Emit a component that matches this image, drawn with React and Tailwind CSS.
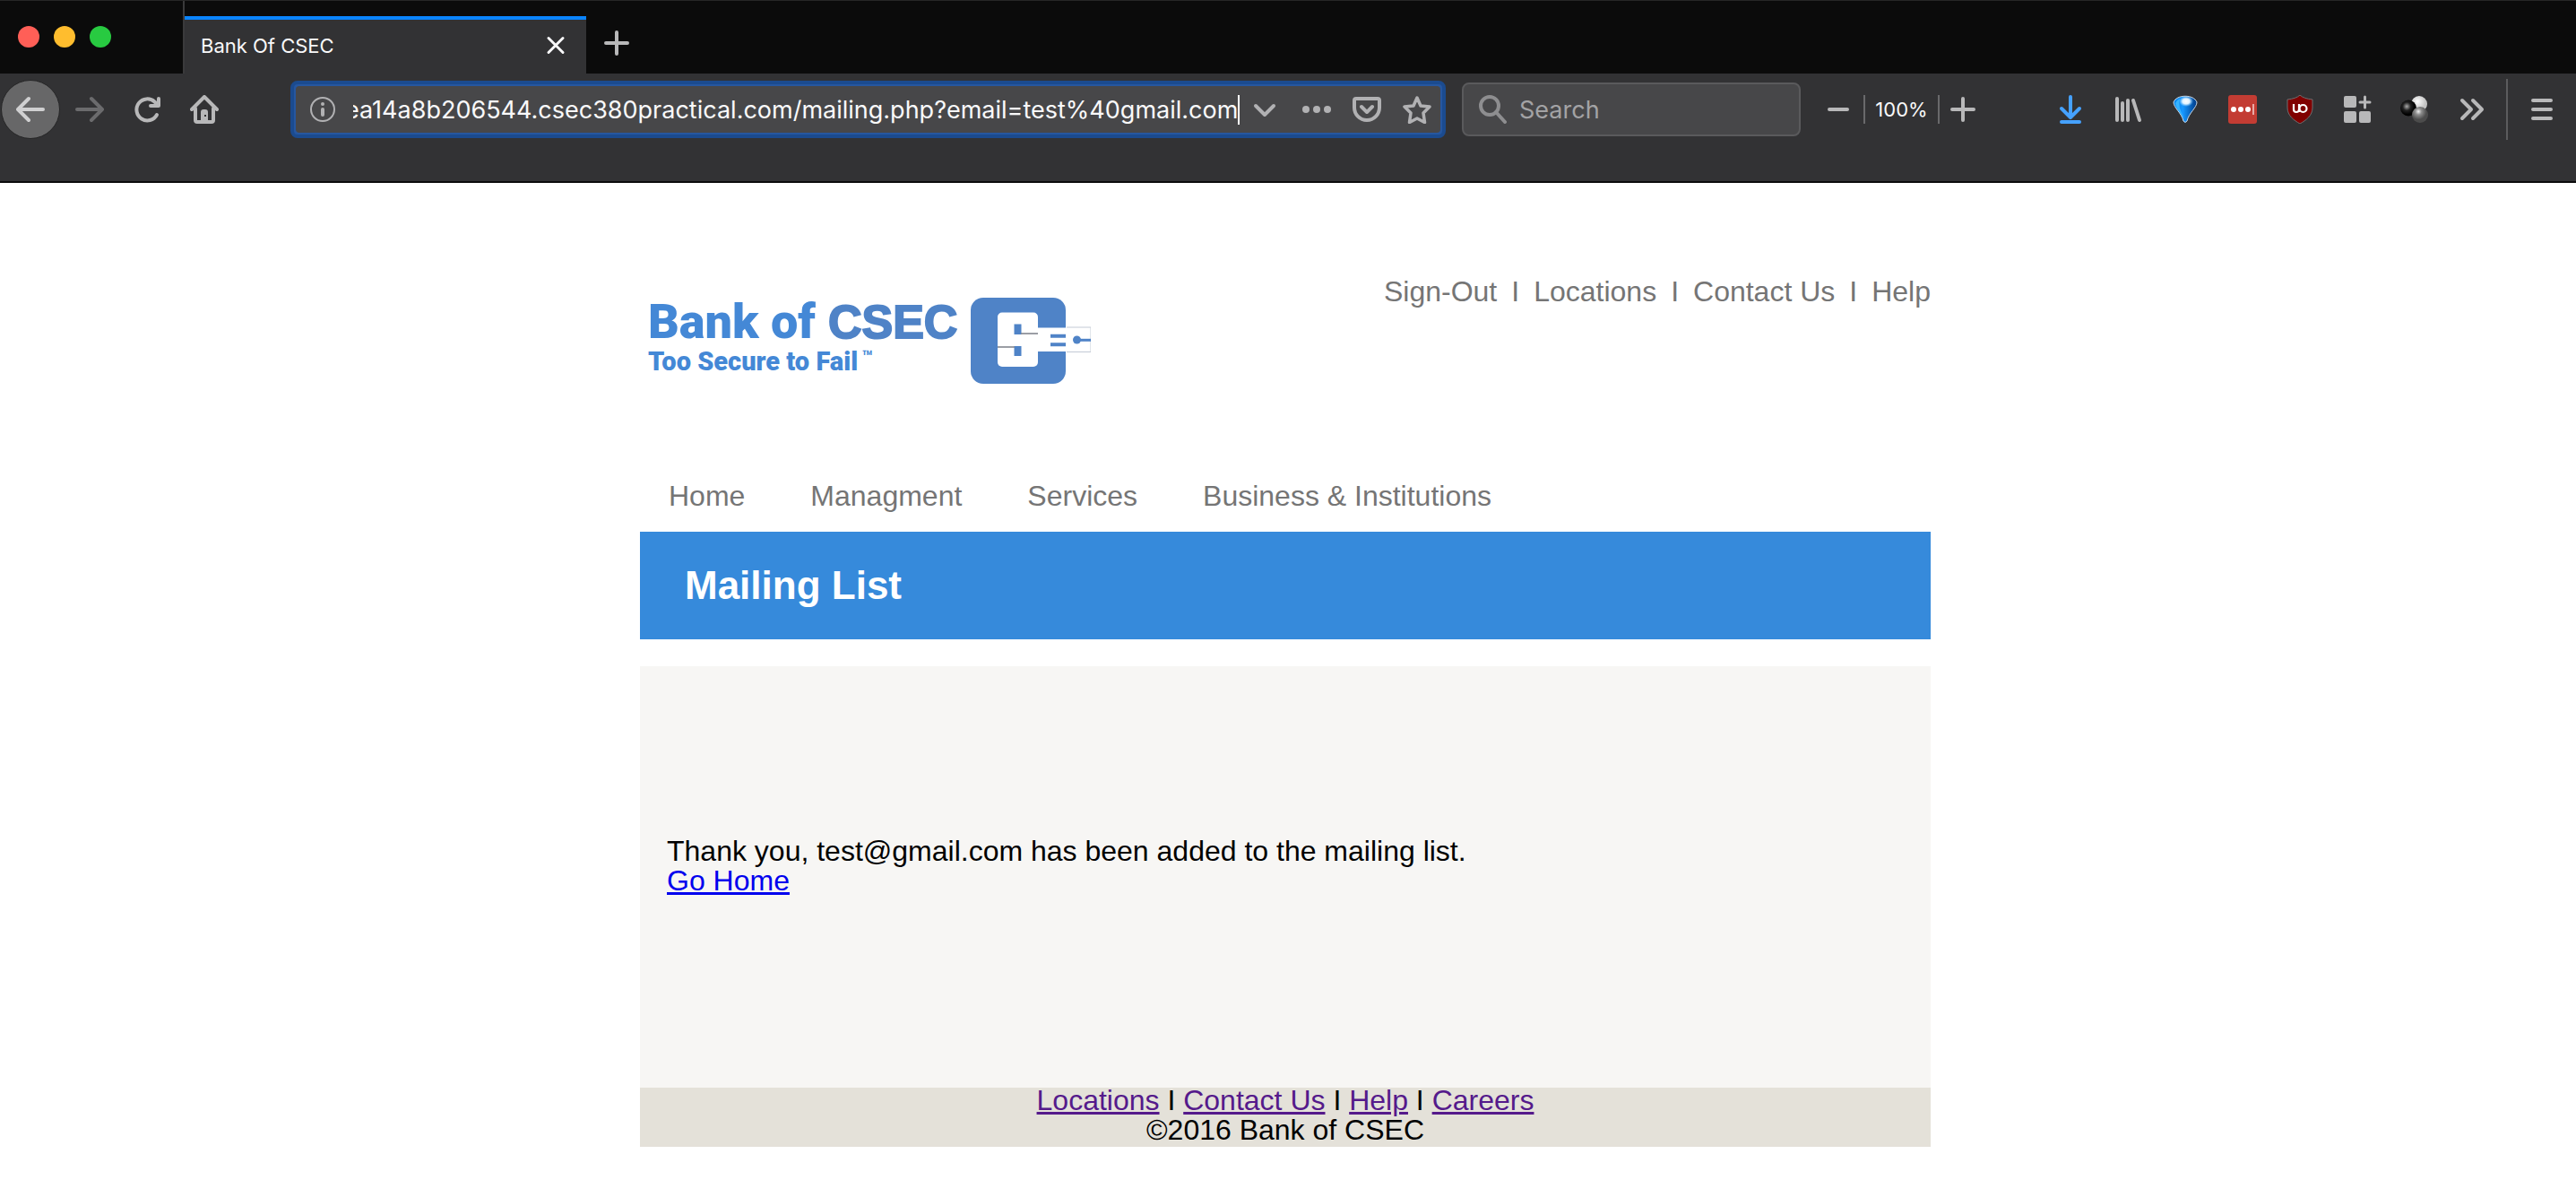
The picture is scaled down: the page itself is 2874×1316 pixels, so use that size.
import { useLayoutEffect, useRef } from "react";

const stroke = {
  fill: "none",
  stroke: "currentColor",
  strokeWidth: 4,
  strokeLinecap: "round",
  strokeLinejoin: "round",
};

function Icon({ children, className = "" }) {
  return (
    <svg viewBox="0 0 32 32" aria-hidden="true" className={`size-8 shrink-0 ${className}`}>
      {children}
    </svg>
  );
}

function IconButton({ label, className = "", children }) {
  return (
    <button type="button" aria-label={label} className={`flex h-16 w-16 shrink-0 items-center justify-center ${className}`}>
      <Icon>{children}</Icon>
    </button>
  );
}

function TabStrip() {
  return (
    <div className="flex h-[82px] border-t border-[#262626] bg-[#0b0b0b]">
      <div className="flex w-[206px] shrink-0 items-center gap-4 border-r-2 border-[#3a3a3b] pb-[2px] pl-5">
        <button type="button" aria-label="Close window" className="size-6 rounded-full bg-[#ff5f57]" />
        <button type="button" aria-label="Minimize window" className="size-6 rounded-full bg-[#ffbd2e]" />
        <button type="button" aria-label="Zoom window" className="size-6 rounded-full bg-[#28ca41]" />
      </div>
      <div className="flex flex-col">
        <div className="h-[17px]" />
        <div className="flex w-[448px] flex-1 items-center justify-between border-t-4 border-[#0a84ff] bg-[#323234] pr-[18px] pb-[2px] pl-[18px] text-[#f9f9fa]">
          <span className="text-[22px]">Bank Of CSEC</span>
          <button type="button" aria-label="Close tab">
            <Icon>
              <path {...stroke} strokeWidth="3" d="M8 7.500l16 16M24 7.500l-16 16" />
            </Icon>
          </button>
        </div>
      </div>
      <button type="button" aria-label="New tab" className="ml-[18px] pt-3 text-[#b8b8b9]">
        <Icon>
          <path {...stroke} d="M16 4v24M4 16h24" />
        </Icon>
      </button>
    </div>
  );
}

function UrlBar() {
  const field = useRef(null);
  useLayoutEffect(() => {
    field.current.scrollLeft = field.current.scrollWidth;
  }, []);
  return (
    <div className="ml-16 flex h-16 min-w-0 flex-1 items-center rounded-lg border-4 border-[#1b4b8f] bg-[#2657a0] p-[2px]">
      <div className="flex h-full min-w-0 flex-1 items-center rounded-sm bg-[#474749] pr-[10px] pl-[14px] text-[#b1b1b3]">
        <button type="button" aria-label="Site information">
          <Icon>
            <circle cx="16" cy="16" r="13" fill="none" stroke="currentColor" strokeWidth="2" />
            <circle cx="16" cy="10" r="2" fill="currentColor" />
            <path {...stroke} d="M16 16v6" />
          </Icon>
        </button>
        <input
          ref={field}
          aria-label="Address"
          readOnly
          className="ml-[18px] min-w-0 flex-1 bg-transparent pt-[2px] text-[27px] text-[#f9f9fa] outline-none"
          value="ea14a8b206544.csec380practical.com/mailing.php?email=test%40gmail.com"
        />
        <span className="h-[33px] w-[2px] shrink-0 bg-white" />
        <button type="button" aria-label="Show history" className="ml-3">
          <Icon>
            <path {...stroke} d="M6 12l10 10l10-10" />
          </Icon>
        </button>
        <button type="button" aria-label="Page actions" className="ml-[26px]">
          <Icon>
            <circle cx="4" cy="16" r="4" fill="currentColor" />
            <circle cx="16" cy="16" r="4" fill="currentColor" />
            <circle cx="28" cy="16" r="4" fill="currentColor" />
          </Icon>
        </button>
        <button type="button" aria-label="Save to Pocket" className="ml-6">
          <Icon>
            <path {...stroke} d="M4 4h24q2 0 2 2v8a14 14 0 0 1-28 0V6q0-2 2-2z" />
            <path {...stroke} d="M10 13l6 6l6-6" />
          </Icon>
        </button>
        <button type="button" aria-label="Bookmark this page" className="ml-6">
          <Icon>
            <path {...stroke} strokeWidth="3.500" d="M16 3l4 9 10 1-7 7 1.500 10.500-8.500-4.500-8.500 4.500L9 20 2 13l10-1z" />
          </Icon>
        </button>
      </div>
    </div>
  );
}

function Toolbar() {
  return (
    <div className="h-[122px] border-b-2 border-[#0b0b0b] bg-[#323234] text-[#b8b8b9]">
      <div className="flex h-20 items-center">
        <button type="button" aria-label="Back" className="ml-[1px] flex size-[66px] shrink-0 items-center justify-center rounded-full border border-[#252526] bg-[#676768] text-[#d0d0d1]">
          <Icon>
            <path {...stroke} d="M14 4L2 16l12 12M3 16h27" />
          </Icon>
        </button>
        <button type="button" aria-label="Forward" disabled className="ml-[17px] text-[#6b6b6d]">
          <Icon>
            <path {...stroke} d="M18 4l12 12-12 12M29 16H2" />
          </Icon>
        </button>
        <IconButton label="Reload" className="ml-4">
          <path {...stroke} d="M27 22A12 12 0 1 1 24.500 7.500L28 11" />
          <path {...stroke} d="M29 4v8h-9" />
          <path d="M29 6v7h-7z" fill="currentColor" />
        </IconButton>
        <IconButton label="Home">
          <path {...stroke} d="M2 16L16 2l14 14M6 15v13q0 2 2 2h16q2 0 2-2V15" />
          <path d="M12 29V19q0-3 3-3h2q3 0 3 3v10z" fill="currentColor" />
          <rect x="16" y="22" width="2" height="2" fill="#323234" />
        </IconButton>
        <UrlBar />
        <div className="ml-[18px] flex h-[60px] w-[378px] shrink-0 items-center rounded-lg border-2 border-[#5a5a5c] bg-[#474749] pl-4 text-[#8e8e90]">
          <Icon>
            <circle cx="13" cy="12" r="10" {...stroke} />
            <path {...stroke} d="M20 19l10 11" />
          </Icon>
          <input
            type="search"
            aria-label="Search"
            placeholder="Search"
            className="ml-[14px] min-w-0 flex-1 bg-transparent pt-[2px] text-[27px] outline-none placeholder:text-[#a3a3a5]"
          />
        </div>
        <button type="button" aria-label="Zoom out" className="ml-[26px]">
          <Icon>
            <path {...stroke} d="M6 16h20" />
          </Icon>
        </button>
        <span className="ml-[12px] h-8 w-[2px] shrink-0 bg-[#69696b]" />
        <button type="button" aria-label="Reset zoom" className="w-[81px] shrink-0 text-center text-[22px] text-[#f9f9fa]">
          100%
        </button>
        <span className="h-8 w-[2px] shrink-0 bg-[#69696b]" />
        <button type="button" aria-label="Zoom in" className="ml-[10px]">
          <Icon>
            <path {...stroke} d="M16 4v24M4 16h24" />
          </Icon>
        </button>
        <IconButton label="Downloads" className="ml-[72px] text-[#45a1ff]">
          <path {...stroke} d="M16 2v23M6 15l10 10 10-10M6 30h20" />
        </IconButton>
        <IconButton label="Library">
          <path {...stroke} d="M4 4v24M10 9v19M16 6v22M22 6l7 22" />
        </IconButton>
        <IconButton label="Balloon">
          <defs>
            <linearGradient id="balloon" x1="0" y1="0" x2="1" y2="0">
              <stop offset="0" stopColor="#0a84e8" />
              <stop offset=".4" stopColor="#1696ff" />
              <stop offset="1" stopColor="#003a86" />
            </linearGradient>
            <radialGradient id="shine">
              <stop offset="0" stopColor="#fff" />
              <stop offset=".5" stopColor="#e0f2ff" />
              <stop offset="1" stopColor="#8ccfff" stopOpacity="0" />
            </radialGradient>
          </defs>
          <path d="M3 8C6-1 26-1 29 8C29 14 20 20 18 29q-2 3-4 0C12 20 3 14 3 8z" fill="url(#balloon)" stroke="#c9d7e4" strokeWidth="1" />
          <path d="M10 4q-3 8 5 22q-10-12-10-17q1-3 5-5z" fill="#36b4ff" />
          <ellipse cx="17" cy="7" rx="8" ry="6" fill="url(#shine)" />
        </IconButton>
        <IconButton label="Password manager">
          <rect width="32" height="32" rx="3" fill="#c33c33" />
          <circle cx="6" cy="16" r="3" fill="#fff" />
          <circle cx="14" cy="16" r="3" fill="#fff" />
          <circle cx="22" cy="16" r="3" fill="#fff" />
          <path d="M28 10v12" stroke="#e8aaa6" strokeWidth="2" />
        </IconButton>
        <IconButton label="Content blocker">
          <path d="M16 0Q20 4 30 5V14C30 23 23 28 16 32C9 28 2 23 2 14V5Q12 4 16 0z" fill="#800000" stroke="#6e6e70" strokeWidth="1" />
          <path d="M9 10v6a3 3 0 0 0 6 0v-6M15 10v9" fill="none" stroke="#fff" strokeWidth="2.200" />
          <circle cx="19.500" cy="15" r="4" fill="none" stroke="#fff" strokeWidth="2.200" />
        </IconButton>
        <IconButton label="Containers">
          <rect x="1" y="1" width="14" height="13" rx="2" fill="currentColor" />
          <rect x="1" y="18" width="14" height="13" rx="2" fill="currentColor" />
          <rect x="18" y="18" width="13" height="13" rx="2" fill="currentColor" />
          <path {...stroke} strokeWidth="3" d="M24.500 2v12M19 8h11" />
        </IconButton>
        <IconButton label="Spheres">
          <defs>
            <radialGradient id="white-ball" cx=".4" cy=".35">
              <stop offset="0" stopColor="#fff" />
              <stop offset="1" stopColor="#c4c4c4" />
            </radialGradient>
            <radialGradient id="black-ball" cx=".4" cy=".4">
              <stop offset="0" stopColor="#aaa" />
              <stop offset=".5" stopColor="#222" />
              <stop offset="1" stopColor="#000" />
            </radialGradient>
            <radialGradient id="gray-ball" cx=".4" cy=".3">
              <stop offset="0" stopColor="#f0f0f0" />
              <stop offset=".4" stopColor="#8d8d8d" />
              <stop offset="1" stopColor="#4c4c4c" />
            </radialGradient>
          </defs>
          <circle cx="21" cy="10" r="9" fill="url(#white-ball)" />
          <circle cx="9" cy="14.500" r="9" fill="url(#black-ball)" />
          <circle cx="22" cy="22" r="9" fill="url(#gray-ball)" />
        </IconButton>
        <IconButton label="More tools">
          <path {...stroke} d="M5 6l10 10L5 26M17 6l10 10-10 10" />
        </IconButton>
        <span className="ml-[6px] h-[68px] w-[2px] shrink-0 bg-[#5c5c5e]" />
        <IconButton label="Menu" className="mr-[6px] ml-[6px]">
          <path {...stroke} d="M6 6h20M6 16h20M6 26h20" />
        </IconButton>
      </div>
    </div>
  );
}

function Logo() {
  return (
    <a href="#home" aria-label="Bank of CSEC home" className="flex items-start">
      <div className="w-[360px] shrink-0 font-[Roboto,sans-serif] font-black whitespace-nowrap text-[#4488d6]">
        <div className="flex items-baseline gap-[14px] text-[54px] leading-[54px]">
          <span>Bank of</span>
          <span className="font-['Liberation_Sans',sans-serif] text-[52px] font-bold text-[#4f83c7] [-webkit-text-stroke:2px_#4f83c7]">CSEC</span>
        </div>
        <div className="flex items-start gap-1 text-[29px] leading-[34px]">
          <span>Too Secure to Fail</span>
          <span className="text-[20px] leading-[24px] font-bold">™</span>
        </div>
      </div>
      <svg viewBox="0 0 134 96" aria-hidden="true" className="h-24 w-[134px] shrink-0">
        <rect width="106" height="96" rx="14" fill="#4f83c7" />
        <rect x="30" y="16.500" width="45" height="60.500" rx="5" fill="#fff" />
        <rect x="74" y="33.500" width="60" height="26.500" fill="#fff" />
        <path d="M48.500 29.500h8V41h-8zM48.500 54h8v11h-8z" fill="#4f83c7" />
        <path d="M56 40h19M30 55h19" stroke="#7b7f88" strokeWidth="1.300" />
        <path d="M107 33h27v27.500h-27" fill="none" stroke="#c3cad5" />
        <path d="M89 42.700h17M89 52.300h17" stroke="#4f83c7" strokeWidth="4" />
        <circle cx="118.500" cy="47" r="4.500" fill="#4f83c7" />
        <path d="M118 47.300h16" stroke="#4f83c7" strokeWidth="3" />
      </svg>
    </a>
  );
}

const topLinks = ["Sign-Out", "Locations", "Contact Us", "Help"];
const navLinks = ["Home", "Managment", "Services", "Business & Institutions"];
const footerLinks = ["Locations", "Contact Us", "Help", "Careers"];

export default function App() {
  return (
    <div className="min-h-screen bg-white font-[Inter,sans-serif]">
      <TabStrip />
      <Toolbar />
      <div className="pr-[6px] font-['Liberation_Sans',Arial,sans-serif] text-[32px] leading-[33px] text-black">
        <div className="mx-auto max-w-[1440px]">
          <header className="flex items-start justify-between pt-[105px] text-[#757575]">
            <div className="pt-[23px] pl-[9px]">
              <Logo />
            </div>
            <nav aria-label="Account" className="flex gap-4">
              {topLinks.map((t, i) => (
                <span key={t} className="flex gap-4">
                  {i > 0 && <span>I</span>}
                  <a href="#top">{t}</a>
                </span>
              ))}
            </nav>
          </header>
          <nav aria-label="Main" className="mt-[109px] flex gap-[73px] pl-8 text-[#757575]">
            {navLinks.map((t) => (
              <a key={t} href="#nav">
                {t}
              </a>
            ))}
          </nav>
          <h1 className="mt-[23px] bg-[#368adb] pt-[35px] pb-[35px] pl-[50px] text-[44px] leading-[50px] font-bold text-white">
            Mailing List
          </h1>
          <main className="mt-[30px] bg-[#f7f6f4] px-[30px] pt-[190px] pb-[214px]">
            <p>Thank you, test@gmail.com has been added to the mailing list.</p>
            <a href="#home" className="text-[#0000ee] underline">
              Go Home
            </a>
          </main>
          <footer className="flex flex-col gap-[5px] bg-[#e4e1d9] pb-[5px] text-center leading-[28px]">
            <p>
              {footerLinks.map((t, i) => (
                <span key={t}>
                  {i > 0 && " I "}
                  <a href="#footer" className="text-[#551a8b] underline">
                    {t}
                  </a>
                </span>
              ))}
            </p>
            <p>©2016 Bank of CSEC</p>
          </footer>
        </div>
      </div>
    </div>
  );
}
